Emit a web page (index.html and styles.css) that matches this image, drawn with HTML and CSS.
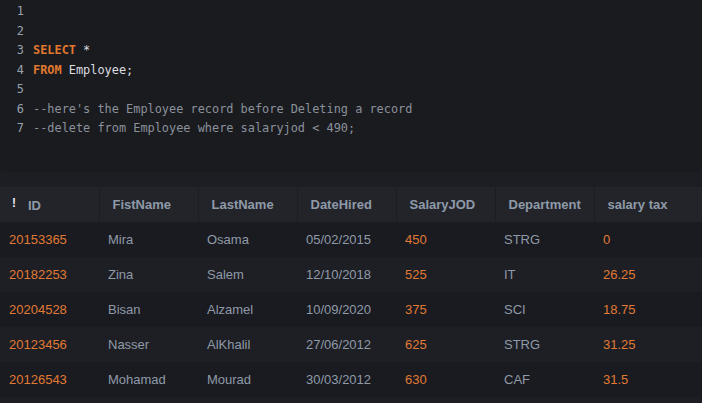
FILE: index.html
```html
<!DOCTYPE html>
<html>
<head>
<meta charset="utf-8">
<link rel="stylesheet" href="styles.css">
</head>
<body>
<div class="editor">
  <div class="line"><span class="ln">1</span><span class="code"></span></div>
  <div class="line"><span class="ln">2</span><span class="code"></span></div>
  <div class="line"><span class="ln">3</span><span class="code"><span class="kw">SELECT</span> *</span></div>
  <div class="line"><span class="ln">4</span><span class="code"><span class="kw">FROM</span> Employee;</span></div>
  <div class="line"><span class="ln">5</span><span class="code"></span></div>
  <div class="line"><span class="ln">6</span><span class="code cm">--here's the Employee record before Deleting a record</span></div>
  <div class="line"><span class="ln">7</span><span class="code cm">--delete from Employee where salaryjod &lt; 490;</span></div>
</div>
<div class="results">
  <table class="grid">
    <thead>
      <tr>
        <th class="first"><span class="bang">!</span>ID</th>
        <th>FistName</th>
        <th>LastName</th>
        <th>DateHired</th>
        <th>SalaryJOD</th>
        <th>Department</th>
        <th class="last">salary tax</th>
      </tr>
    </thead>
    <tbody>
      <tr><td class="num">20153365</td><td>Mira</td><td>Osama</td><td>05/02/2015</td><td class="num">450</td><td>STRG</td><td class="num">0</td></tr>
      <tr><td class="num">20182253</td><td>Zina</td><td>Salem</td><td>12/10/2018</td><td class="num">525</td><td>IT</td><td class="num">26.25</td></tr>
      <tr><td class="num">20204528</td><td>Bisan</td><td>Alzamel</td><td>10/09/2020</td><td class="num">375</td><td>SCI</td><td class="num">18.75</td></tr>
      <tr><td class="num">20123456</td><td>Nasser</td><td>AlKhalil</td><td>27/06/2012</td><td class="num">625</td><td>STRG</td><td class="num">31.25</td></tr>
      <tr><td class="num">20126543</td><td>Mohamad</td><td>Mourad</td><td>30/03/2012</td><td class="num">630</td><td>CAF</td><td class="num">31.5</td></tr>
    </tbody>
  </table>
</div>
</body>
</html>
```
FILE: styles.css
```css
html, body {
  margin: 0;
  padding: 0;
  background: #1d1e23;
  width: 702px;
  height: 403px;
  overflow: hidden;
}

.editor {
  background: #1a1b1f;
  height: 172px;
  box-sizing: border-box;
  padding-top: 2px;
  border-radius: 0 0 6px 6px;
  font-family: "DejaVu Sans Mono", "Liberation Mono", monospace;
  font-size: 11.9px;
}

.line {
  display: flex;
  height: 19.5px;
  line-height: 19.5px;
  white-space: pre;
}

.ln {
  width: 24px;
  text-align: right;
  color: #97a2ae;
  flex: none;
}

.code {
  margin-left: 9px;
  color: #dcdee2;
}

.kw {
  color: #e0782f;
  font-weight: bold;
}

.cm {
  color: #8a919b;
}

.results {
  padding-top: 15px;
}

.grid {
  border-collapse: collapse;
  width: 702px;
  table-layout: fixed;
  font-family: "Liberation Sans", Arial, sans-serif;
  font-size: 13px;
}

.grid th {
  background: #23242a;
  color: #8e9aa8;
  font-weight: bold;
  text-align: left;
  height: 35px;
  padding: 0 0 0 13px;
  width: 99px;
  border-right: 1px solid #1c1d21;
  box-sizing: border-box;
}

.grid th.first {
  padding-left: 12px;
}

.grid th.last {
  width: 108px;
  border-right: none;
}

.bang {
  display: inline-block;
  width: 16px;
  color: #e6e6ea;
  font-size: 12px;
  vertical-align: 3px;
}

.grid td {
  height: 35px;
  padding: 0 0 0 9px;
  color: #8f9aa8;
  white-space: nowrap;
}

.grid td.num {
  color: #e07a34;
}

.grid tbody tr:nth-child(odd) {
  background: #1a1b20;
}

.grid tbody tr:nth-child(even) {
  background: #1e1f24;
}
```
